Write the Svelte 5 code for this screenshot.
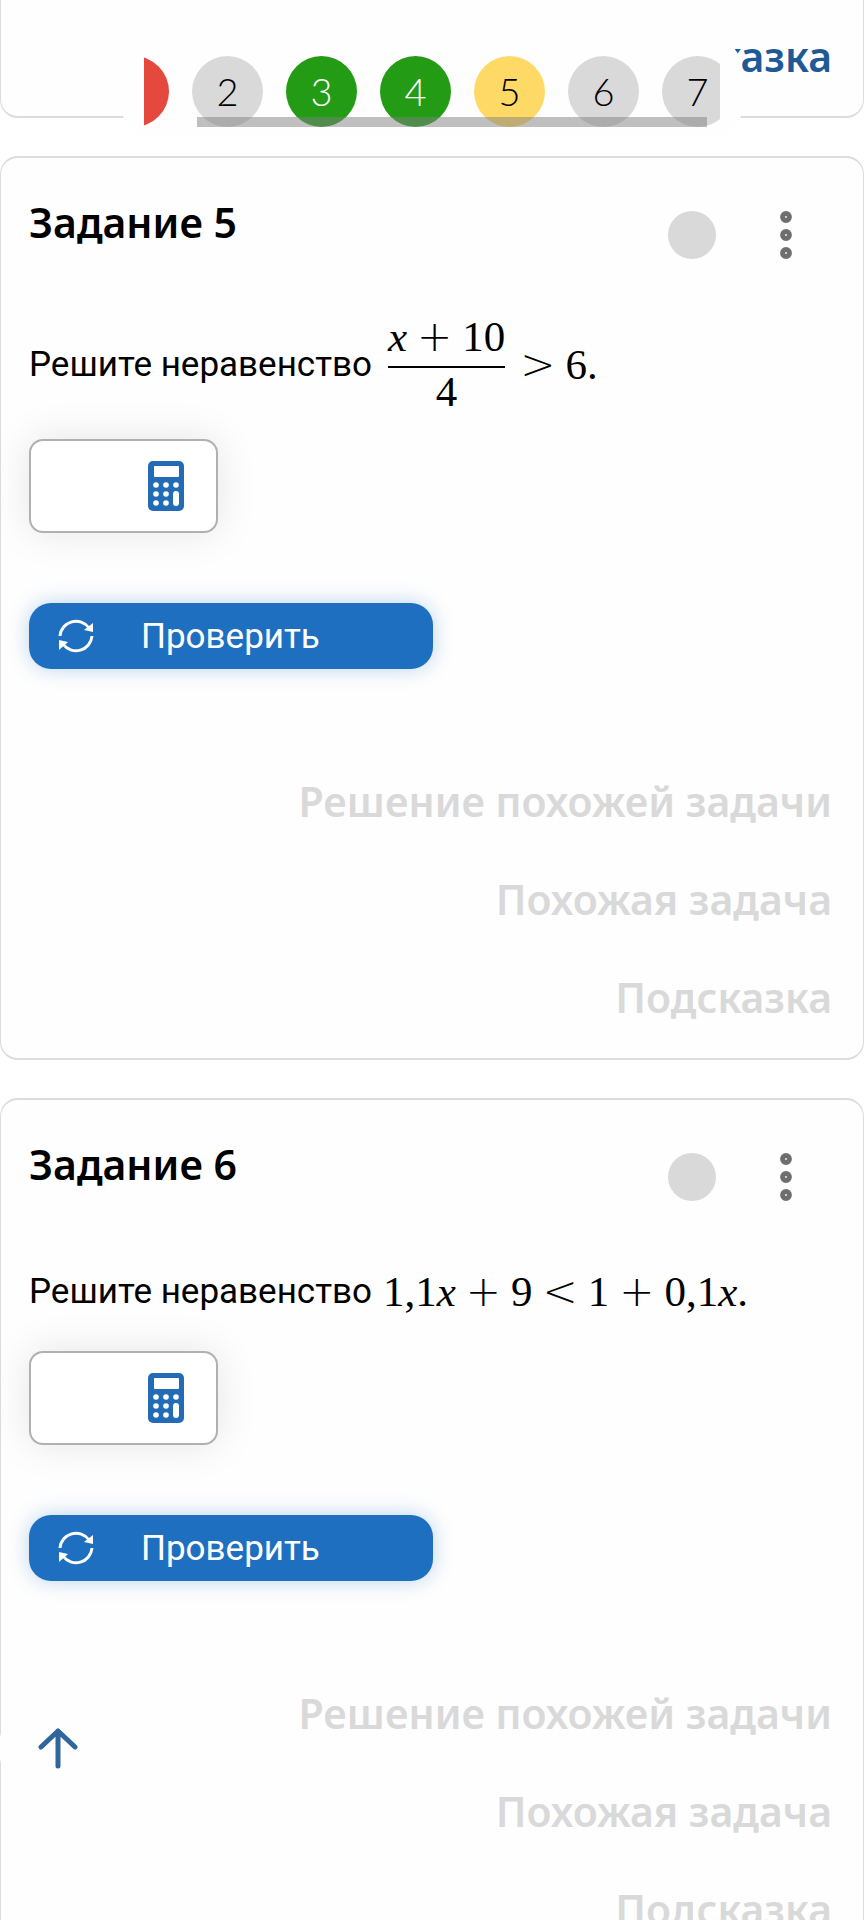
<script>
	import { onMount } from 'svelte';

	const steps = [
		{ n: 1, state: 'wrong' },
		{ n: 2, state: 'empty' },
		{ n: 3, state: 'right' },
		{ n: 4, state: 'right' },
		{ n: 5, state: 'current' },
		{ n: 6, state: 'empty' },
		{ n: 7, state: 'empty' }
	];

	const tasks = [{ n: 5 }, { n: 6 }];
	const hints = ['Решение похожей задачи', 'Похожая задача', 'Подсказка'];

	let scroller;
	let page;

	onMount(() => {
		scroller.scrollLeft = 46;
	});

	function toTop() {
		page.scrollTo({ top: 0, behavior: 'smooth' });
	}
</script>

<div class="page" bind:this={page}>
	<section class="card first">
		<a class="hint active" href="#hint">Подсказка</a>
	</section>

	{#each tasks as task}
		<section class="card">
			<header>
				<h2>Задание {task.n}</h2>
				<span class="status"></span>
				<button class="menu" aria-label="Меню">
					<svg width="12" height="48" viewBox="0 0 12 48">
						<g fill="#fff" stroke="#6e6e6e" stroke-width="5">
							<circle cx="6" cy="6" r="3.4" />
							<circle cx="6" cy="24" r="3.4" />
							<circle cx="6" cy="42" r="3.4" />
						</g>
					</svg>
				</button>
			</header>

			<label class="question" for="answer-{task.n}">
				<span>Решите неравенство</span>
				{#if task.n === 5}
					<span class="math">
						<span class="frac">
							<span class="num"><i>x</i><b class="op">+</b>10</span>
							<span class="den">4</span>
						</span>
						<b class="op">&gt;</b>6.
					</span>
				{:else}
					<span class="math">1,1<i>x</i><b class="op">+</b>9<b class="op">&lt;</b>1<b class="op">+</b>0,1<i>x</i>.</span>
				{/if}
			</label>

			<div class="answer">
				<input id="answer-{task.n}" type="text" />
				<button class="calc" aria-label="Калькулятор">
					<svg width="36" height="50" viewBox="0 0 36 50">
						<rect width="36" height="50" rx="5" fill="#236bb5" />
						<g fill="#fff">
							<rect x="6" y="5" width="25" height="11" rx="1" />
							<circle cx="8" cy="24" r="2.8" />
							<circle cx="18" cy="24" r="2.8" />
							<circle cx="28" cy="24" r="2.8" />
							<circle cx="8" cy="33" r="2.8" />
							<circle cx="18" cy="33" r="2.8" />
							<circle cx="8" cy="42" r="2.8" />
							<circle cx="18" cy="42" r="2.8" />
							<rect x="25" y="30" width="6" height="15" rx="3" />
						</g>
					</svg>
				</button>
			</div>

			<button class="check">
				<svg width="36" height="36" viewBox="0 0 36 36">
					<g fill="none" stroke="#fff" stroke-width="3">
						<path d="M2 18A16 16 0 0 1 31 10" />
						<path d="M34 18A16 16 0 0 1 5 26" />
					</g>
					<path d="M35 5V14L26 12Z" fill="#fff" />
					<path d="M1 32V22L10 24Z" fill="#fff" />
				</svg>
				Проверить
			</button>

			<div class="hints">
				{#each hints as hint}
					<a class="hint" href="#hint">{hint}</a>
				{/each}
			</div>
		</section>
	{/each}
</div>

<nav>
	<div class="steps" bind:this={scroller}>
		{#each steps as step}
			<button class="step {step.state}">{step.n}</button>
		{/each}
	</div>
	<div class="thumb"></div>
</nav>

<button class="up" aria-label="Наверх" onclick={toTop}>
	<svg width="40" height="42" viewBox="0 0 40 42" fill="none" stroke="#2f669c" stroke-width="5" stroke-linecap="round" stroke-linejoin="round">
		<path d="M20 39V4M3 20L20 4L37 20" />
	</svg>
</button>

<style>
	:global(body) {
		background: #fff;
		overflow: hidden;
	}
	.page {
		height: 100vh;
		overflow-y: auto;
		scrollbar-width: none;
		font-family: Roboto, sans-serif;
		font-size: 35px;
		color: #000;
	}
	button {
		border: none;
		background: none;
		padding: 0;
		font: inherit;
		cursor: pointer;
	}
	svg {
		display: block;
	}
	.card {
		box-sizing: border-box;
		margin-bottom: 38px;
		padding: 0 31px 37px 28px;
		border: solid #dcdcdc;
		border-width: 2px 1px;
		border-radius: 18px;
		background: #fefefe;
	}
	.first {
		display: flex;
		justify-content: flex-end;
		padding-top: 32px;
		padding-bottom: 36px;
		border-top: none;
		border-radius: 0 0 18px 18px;
	}
	header {
		display: flex;
		align-items: flex-start;
		height: 105px;
		padding-top: 53px;
	}
	h2 {
		flex: 1;
		margin: -13px 0 0;
		font: 600 41px/48px 'Noto Sans', sans-serif;
	}
	.status {
		width: 48px;
		height: 48px;
		border-radius: 50%;
		background: #d9d9d9;
	}
	.menu {
		display: flex;
		justify-content: center;
		width: 92px;
		margin-left: 24px;
	}
	.question {
		display: flex;
		align-items: center;
		gap: 11px;
		min-height: 67px;
	}
	.math {
		display: flex;
		align-items: center;
		font: 43px/42px 'Liberation Serif', serif;
	}
	.frac {
		display: flex;
		flex-direction: column;
		align-items: center;
		margin: 0 5px;
	}
	.num {
		display: flex;
		padding-bottom: 8px;
		border-bottom: 2px solid #000;
	}
	.den {
		padding-top: 3px;
	}
	.op {
		margin: 0 10px;
		font: 200 42px/42px 'DejaVu Sans', sans-serif;
	}
	.answer {
		box-sizing: border-box;
		display: flex;
		align-items: center;
		width: 189px;
		height: 94px;
		margin: 26px 0 70px;
		padding: 0 32px 0 20px;
		border: 2px solid #b0b0b0;
		border-radius: 14px;
		background: #fff;
		box-shadow: 0 0 40px rgba(0, 0, 0, 0.1);
	}
	.answer input {
		flex: 1;
		min-width: 0;
		border: none;
		outline: none;
		background: none;
		font: inherit;
	}
	.check {
		display: flex;
		align-items: center;
		gap: 47px;
		width: 404px;
		height: 66px;
		padding-left: 29px;
		border-radius: 22px;
		background: #1f6fc0;
		box-shadow: 0 0 20px rgba(31, 111, 192, 0.3);
		color: #fff;
	}
	.hints {
		display: flex;
		flex-direction: column;
		align-items: flex-end;
		gap: 50px;
		margin-top: 108px;
	}
	.hint {
		font: 600 41px/48px 'Noto Sans', sans-serif;
		color: #d9d9d9;
		text-decoration: none;
	}
	.active {
		color: #1f5a96;
	}
	nav {
		position: fixed;
		top: 40px;
		left: 122px;
		right: 122px;
		padding: 16px 22px 10px;
		border-radius: 28px;
		background: #fefefe;
	}
	.steps {
		display: flex;
		gap: 23px;
		overflow-x: auto;
		scrollbar-width: none;
	}
	.step {
		flex: none;
		width: 71px;
		height: 71px;
		border-radius: 50%;
		background: #d9d9d9;
		font: 300 38px/71px Lato, sans-serif;
		color: #000;
	}
	.wrong {
		background: #e5483d;
		color: #fff;
	}
	.right {
		background: #239b15;
		color: #fff;
	}
	.current {
		background: #ffd966;
	}
	.thumb {
		position: absolute;
		left: 75px;
		right: 35px;
		bottom: 10px;
		height: 10px;
		background: rgba(128, 128, 128, 0.5);
	}
	.up {
		position: fixed;
		left: -1px;
		bottom: 113px;
		display: grid;
		place-items: center;
		width: 118px;
		height: 118px;
		border-radius: 50%;
		background: #fefefe;
	}
</style>
